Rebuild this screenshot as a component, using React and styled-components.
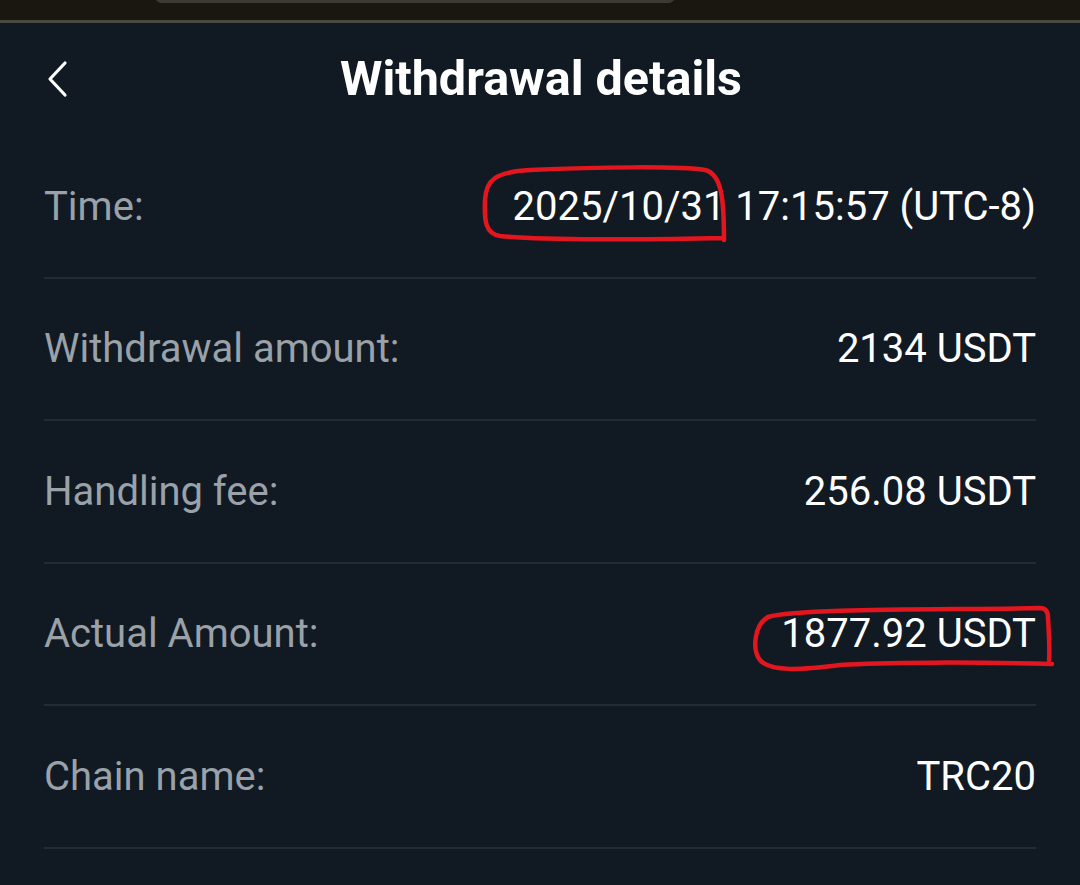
import styled, { createGlobalStyle } from "styled-components";

const Global = createGlobalStyle`
  body {
    margin: 0;
    background: #111a23;
    font-family: Roboto, "Liberation Sans", sans-serif;
  }
`;

const rows = [
  { label: "Time:", value: "2025/10/31 17:15:57 (UTC-8)" },
  { label: "Withdrawal amount:", value: "2134 USDT" },
  { label: "Handling fee:", value: "256.08 USDT" },
  { label: "Actual Amount:", value: "1877.92 USDT" },
  { label: "Chain name:", value: "TRC20" },
];

export default function App() {
  return (
    <Screen>
      <Global />
      <StatusBar>
        <Notch />
      </StatusBar>
      <Header>
        <BackButton aria-label="back">
          <svg width="24" height="38" viewBox="0 0 24 38" fill="none">
            <path d="M19 3 L4 19 L19 35" stroke="#fff" strokeWidth="3.2" strokeLinecap="round" strokeLinejoin="round" />
          </svg>
        </BackButton>
        <Title>Withdrawal details</Title>
      </Header>
      <List>
        {rows.map((r) => (
          <Row key={r.label}>
            <Label>{r.label}</Label>
            <Value>{r.value}</Value>
          </Row>
        ))}
      </List>
      {/* hand-drawn red markup over the values */}
      <Marks viewBox="0 0 1080 885" width="1080" height="885">
        <path
          d="M722 238 C650 240 540 240 500 236 C486 234 484 222 485 200 C486 180 495 172 530 170 C600 167 680 166 705 170 C722 174 724 200 724 240"
        />
        <path d="M1048 618 C1049 635 1050 650 1049 660" />
        <path
          d="M1052 664 C980 662 880 662 840 665 C800 670 770 672 760 660 C752 650 754 625 768 617 C800 608 950 610 1040 608 C1046 608 1048 612 1048 618"
        />
      </Marks>
    </Screen>
  );
}

const Screen = styled.div`
  position: relative;
  width: 1080px;
  height: 885px;
  overflow: hidden;
  background: #111a23;
`;

const StatusBar = styled.div`
  position: relative;
  height: 20px;
  background: #1a1710;
  border-bottom: 3px solid #4a4940;
`;

const Notch = styled.div`
  position: absolute;
  left: 155px;
  top: -10px;
  width: 520px;
  height: 13px;
  border-radius: 8px;
  background: #3c3a33;
`;

const Header = styled.div`
  position: relative;
  height: 113px;
  display: flex;
  align-items: center;
  justify-content: center;
`;

const BackButton = styled.div`
  position: absolute;
  left: 46px;
  top: 37px;
  display: flex;
`;

const Title = styled.h1`
  margin: 0 0 0 2px;
  color: #fff;
  font-size: 48.5px;
  font-weight: 700;
  line-height: 1;
`;

const List = styled.div`
  padding: 0 44px;
  display: flex;
  flex-direction: column;
`;

const Row = styled.div`
  height: 140.5px;
  display: flex;
  align-items: center;
  justify-content: space-between;
  border-bottom: 2px solid #232c35;
`;

const Label = styled.span`
  color: #9aa1a8;
  font-size: 40px;
`;

const Value = styled.span`
  color: #fff;
  font-size: 40px;
`;

const Marks = styled.svg`
  position: absolute;
  left: 0;
  top: 0;
  pointer-events: none;
  fill: none;
  stroke: #e3161f;
  stroke-width: 4.5;
  stroke-linecap: round;
  stroke-linejoin: round;
`;
